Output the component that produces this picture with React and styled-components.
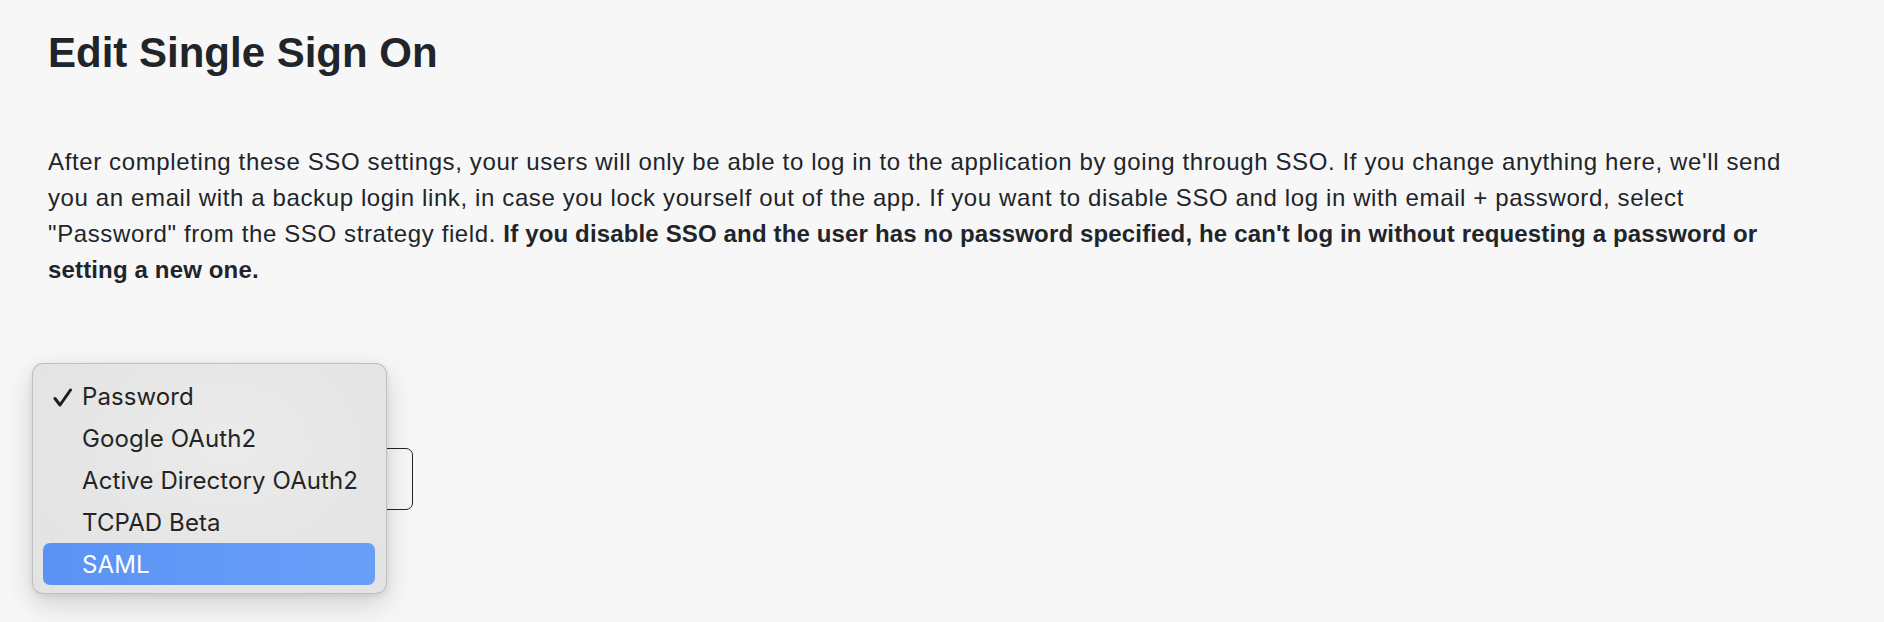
import React from 'react';
import styled, { createGlobalStyle } from 'styled-components';

const GlobalStyle = createGlobalStyle`
  html, body {
    margin: 0;
    padding: 0;
    background: #f7f7f7;
  }
  body {
    font-family: "Liberation Sans", Arial, Helvetica, sans-serif;
    color: #212529;
  }
`;

const Page = styled.main`
  padding: 28px 48px 0;
  min-height: 622px;
  box-sizing: border-box;
`;

const Heading = styled.h1`
  margin: 0;
  font-size: 42px;
  line-height: 1.2;
  font-weight: 700;
  color: #212529;
`;

const Intro = styled.p`
  margin: 66px 0 0;
  max-width: 1746px;
  font-size: 24px;
  letter-spacing: 0.62px;
  line-height: 36px;
  color: #212529;
`;

const Warning = styled.strong`
  font-weight: 700;
  letter-spacing: 0.15px;
`;

const FormGroup = styled.div`
  position: relative;
  margin-top: 160px;
  width: 365px;
`;

const SelectBox = styled.div`
  height: 62px;
  box-sizing: border-box;
  border: 1px solid #212529;
  border-radius: 7px;
  background: #f7f7f7;
`;

const Menu = styled.ul`
  position: absolute;
  left: -16px;
  top: -85px;
  width: 355px;
  box-sizing: border-box;
  margin: 0;
  padding: 11px 11px 8px 10px;
  list-style: none;
  border-radius: 11px;
  background: radial-gradient(ellipse at 55% 35%, #ebebeb 0%, #e5e5e5 60%, #e3e3e3 100%);
  border: 1px solid rgba(0, 0, 0, 0.16);
  box-shadow: 0 10px 28px rgba(0, 0, 0, 0.16), 0 2px 6px rgba(0, 0, 0, 0.08);
  font-family: Inter, "Noto Sans", sans-serif;
`;

const Item = styled.li`
  position: relative;
  height: 42px;
  display: flex;
  align-items: center;
  padding-left: 39px;
  border-radius: 7px;
  font-size: 24px;
  letter-spacing: 0.1px;
  color: ${(p) => (p.$active ? '#ffffff' : '#242424')};
  background: ${(p) => (p.$active ? 'linear-gradient(90deg, #5a93f5 0%, #6a9ff8 100%)' : 'transparent')};
`;

const Check = styled.svg`
  position: absolute;
  left: 10px;
  top: 13px;
  width: 19px;
  height: 19px;
`;

const options = ['Password', 'Google OAuth2', 'Active Directory OAuth2', 'TCPAD Beta', 'SAML'];

export default function App() {
  return (
    <>
      <GlobalStyle />
      <Page>
        <Heading>Edit Single Sign On</Heading>
        <Intro>
          After completing these SSO settings, your users will only be able to log in to the application by
          going through SSO. If you change anything here, we'll send you an email with a backup login link, in
          case you lock yourself out of the app. If you want to disable SSO and log in with email + password,
          select "Password" from the SSO strategy field.{' '}
          <Warning>
            If you disable SSO and the user has no password specified, he can't log in without requesting a
            password or setting a new one.
          </Warning>
        </Intro>
        <FormGroup>
          <SelectBox aria-label="SSO strategy" />
          <Menu>
            {options.map((o, i) => (
              <Item key={o} $active={o === 'SAML'}>
                {i === 0 && (
                  <Check viewBox="0 0 19 19">
                    <path d="M2 10.5 L7 17 L17.5 2" fill="none" stroke="#1e1e1e" strokeWidth="3" strokeLinecap="round" strokeLinejoin="round" />
                  </Check>
                )}
                {o}
              </Item>
            ))}
          </Menu>
        </FormGroup>
      </Page>
    </>
  );
}
